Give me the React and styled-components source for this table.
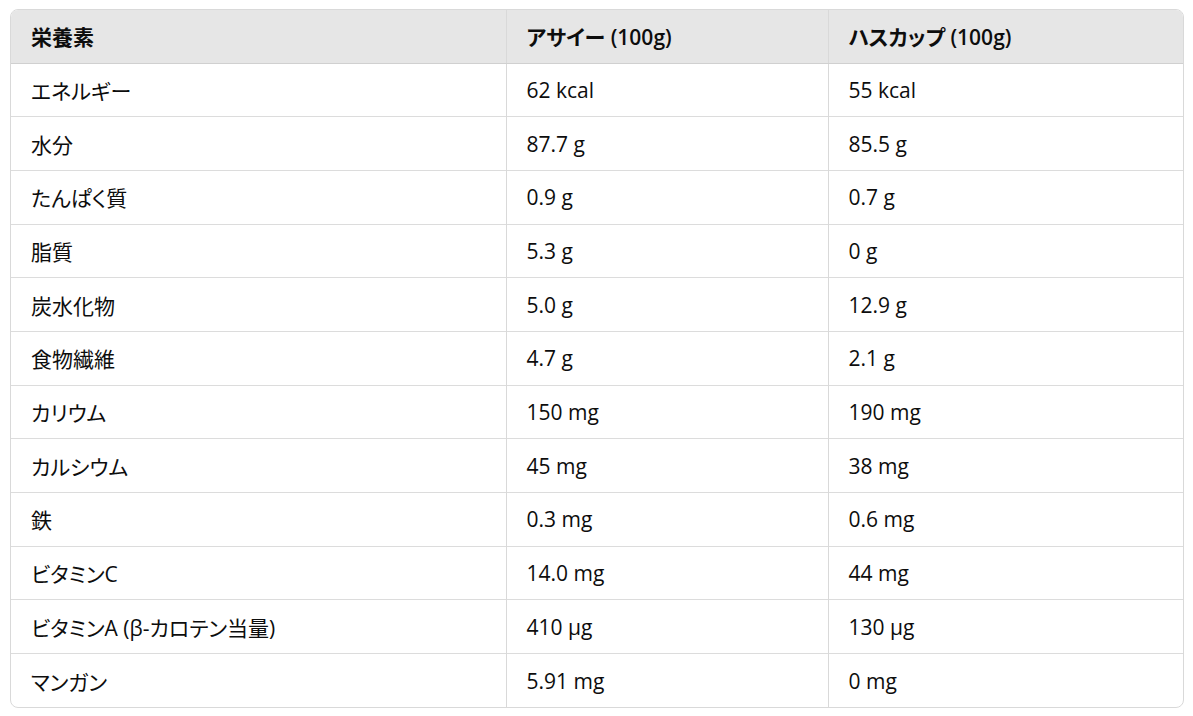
import styled, { createGlobalStyle } from "styled-components";

const rows = [
  ["エネルギー", "62 kcal", "55 kcal"],
  ["水分", "87.7 g", "85.5 g"],
  ["たんぱく質", "0.9 g", "0.7 g"],
  ["脂質", "5.3 g", "0 g"],
  ["炭水化物", "5.0 g", "12.9 g"],
  ["食物繊維", "4.7 g", "2.1 g"],
  ["カリウム", "150 mg", "190 mg"],
  ["カルシウム", "45 mg", "38 mg"],
  ["鉄", "0.3 mg", "0.6 mg"],
  ["ビタミンC", "14.0 mg", "44 mg"],
  ["ビタミンA (β-カロテン当量)", "410 µg", "130 µg"],
  ["マンガン", "5.91 mg", "0 mg"],
];

const GlobalStyle = createGlobalStyle`
  body {
    margin: 0;
    background: #ffffff;
    font-family: "Open Sans", "Noto Sans CJK JP", sans-serif;
    font-feature-settings: "palt";
    color: #0d0d0d;
  }
`;

const Page = styled.div`
  padding: 9px 9px 0 10px;
`;

const Frame = styled.div`
  width: 1174px;
  border: 1px solid #d9d9d9;
  border-radius: 8px;
  overflow: hidden;
  box-sizing: border-box;
`;

const Table = styled.table`
  width: 100%;
  border-collapse: collapse;
  table-layout: fixed;
  font-size: 21px;
`;

const HeadCell = styled.th`
  width: ${(props) => props.width}px;
  height: 53px;
  padding: 0 20px;
  text-align: left;
  font-weight: 600;
  background: #e6e6e6;
  border-bottom: 1px solid #d0d0d0;
  border-left: ${(props) => (props.first ? "none" : "1px solid #d9d9d9")};
  box-sizing: border-box;
`;

const Row = styled.tr`
  height: 53.7px;
  border-top: ${(props) => (props.first ? "none" : "1px solid #dcdcdc")};
`;

const Cell = styled.td`
  padding: 0 20px;
  font-weight: 400;
  border-left: ${(props) => (props.first ? "none" : "1px solid #d9d9d9")};
  white-space: nowrap;
`;

export default function App() {
  return (
    <Page>
      <GlobalStyle />
      <Frame>
        <Table>
          <thead>
            <tr>
              <HeadCell first width={495}>栄養素</HeadCell>
              <HeadCell width={322}>アサイー (100g)</HeadCell>
              <HeadCell>ハスカップ (100g)</HeadCell>
            </tr>
          </thead>
          <tbody>
            {rows.map(([name, acai, haskap], i) => (
              <Row key={name} first={i === 0}>
                <Cell first>{name}</Cell>
                <Cell>{acai}</Cell>
                <Cell>{haskap}</Cell>
              </Row>
            ))}
          </tbody>
        </Table>
      </Frame>
    </Page>
  );
}
